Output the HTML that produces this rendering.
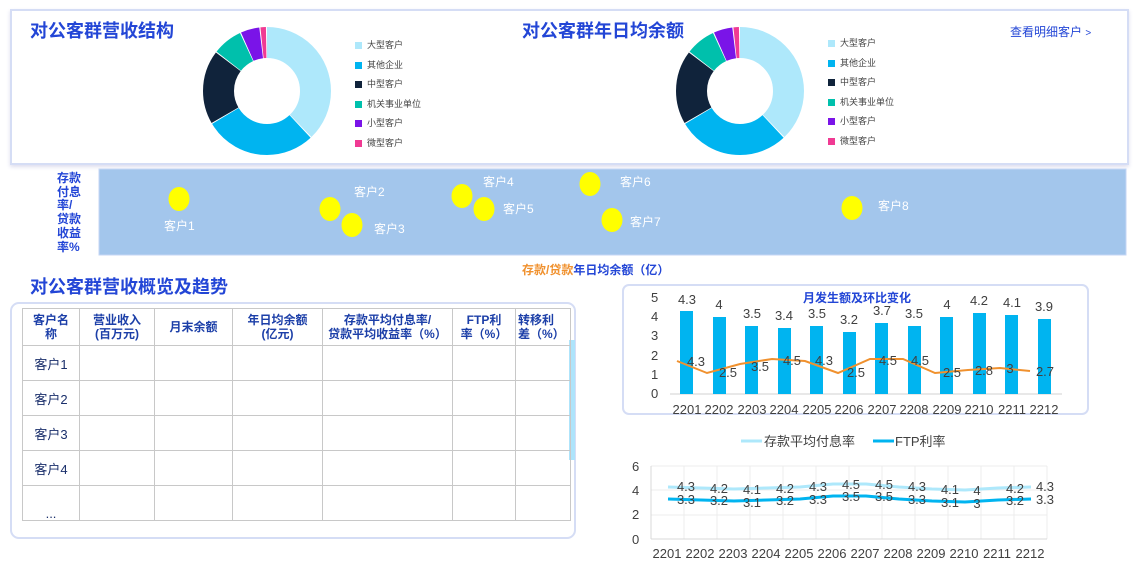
<!DOCTYPE html>
<html><head><meta charset="utf-8"><style>
*{margin:0;padding:0;box-sizing:border-box}
body{width:1137px;height:562px;background:#fff;position:relative;overflow:hidden;font-family:"Liberation Sans","Noto Sans CJK SC",sans-serif}
.a{position:absolute;white-space:nowrap}
.t{color:#2346d6;font-weight:bold;font-size:18px}
.lg{font-size:9px;color:#444}
.lg i{display:inline-block;width:7px;height:7px;margin-right:5px;vertical-align:-1px}
table{border-collapse:collapse;table-layout:fixed}
td{border:1px solid #c8c8c8;text-align:center;font-size:13px;color:#1a2f6b;height:35px}
tr.h td{font-size:12px;font-weight:bold;color:#1c3fa8;height:37px;line-height:14px}
</style></head><body>
<div class="a" style="left:10px;top:9px;width:1119px;height:156px;border:2px solid #d5ddf5;box-shadow:0 2px 4px #dde"></div>
<div class="a t" style="left:30px;top:17px">对公客群营收结构</div>
<div class="a t" style="left:522px;top:17px">对公客群年日均余额</div>
<div class="a" style="left:1010px;top:23px;font-size:12px;color:#2346d6">查看明细客户 <span style="font-size:10px">&gt;</span></div>
<svg class="a" style="left:0;top:0" width="1137" height="562">
<g id="p1" transform="translate(267,91) rotate(-90)" fill="none" stroke-width="31">
<circle r="48.5" pathLength="360" stroke="#aee8fb" stroke-dasharray="136 360"/>
<circle r="48.5" pathLength="360" stroke="#00b4f0" stroke-dasharray="102 360" stroke-dashoffset="-137"/>
<circle r="48.5" pathLength="360" stroke="#10233b" stroke-dasharray="67 360" stroke-dashoffset="-240"/>
<circle r="48.5" pathLength="360" stroke="#00c0ac" stroke-dasharray="27 360" stroke-dashoffset="-308"/>
<circle r="48.5" pathLength="360" stroke="#7a14e8" stroke-dasharray="17 360" stroke-dashoffset="-336"/>
<circle r="48.5" pathLength="360" stroke="#f03a93" stroke-dasharray="5 360" stroke-dashoffset="-354"/>
</g>
<use href="#p1" transform="translate(473,0)"/>
<rect x="99" y="169" width="1027" height="86" fill="#a3c6ec" stroke="#c5d6f5"/>
<g fill="#ffff00">
<ellipse cx="179" cy="199" rx="10.5" ry="12"/><ellipse cx="330" cy="209" rx="10.5" ry="12"/><ellipse cx="352" cy="225" rx="10.5" ry="12"/><ellipse cx="462" cy="196" rx="10.5" ry="12"/><ellipse cx="484" cy="209" rx="10.5" ry="12"/><ellipse cx="590" cy="184" rx="10.5" ry="12"/><ellipse cx="612" cy="220" rx="10.5" ry="12"/><ellipse cx="852" cy="208" rx="10.5" ry="12"/>
</g>
<g fill="#fff" font-size="12" font-family="Liberation Sans,Noto Sans CJK SC,sans-serif">
<text x="164" y="230">客户1</text><text x="354" y="196">客户2</text><text x="374" y="233">客户3</text><text x="483" y="186">客户4</text><text x="503" y="213">客户5</text><text x="620" y="186">客户6</text><text x="630" y="226">客户7</text><text x="878" y="210">客户8</text>
</g>
<rect x="11" y="303" width="564" height="235" rx="8" fill="#fff" stroke="#d5ddf5" stroke-width="2"/>
<rect x="569" y="340" width="6" height="120" fill="#aee4fb"/>
<rect x="623" y="285" width="465" height="129" rx="6" fill="#fff" stroke="#d5ddf5" stroke-width="2"/>
<line x1="670" y1="394" x2="1062" y2="394" stroke="#d0d0d0"/>
<g font-size="13" fill="#404040" font-family="Liberation Sans,sans-serif">
<text x="651" y="302">5</text><text x="651" y="321">4</text><text x="651" y="340">3</text><text x="651" y="360">2</text><text x="651" y="379">1</text><text x="651" y="398">0</text>
</g>
<g fill="#00b4f0">
<rect x="680" y="311" width="13" height="83"/><rect x="713" y="317" width="13" height="77"/><rect x="745" y="326" width="13" height="68"/><rect x="778" y="328" width="13" height="66"/><rect x="810" y="326" width="13" height="68"/><rect x="843" y="332" width="13" height="62"/><rect x="875" y="323" width="13" height="71"/><rect x="908" y="326" width="13" height="68"/><rect x="940" y="317" width="13" height="77"/><rect x="973" y="313" width="13" height="81"/><rect x="1005" y="315" width="13" height="79"/><rect x="1038" y="319" width="13" height="75"/>
</g>
<polyline fill="none" stroke="#f0912e" stroke-width="2" points="677,361 707,373 740,364 772,359 805,361 838,373 870,359 903,359 935,373 968,370 1000,368 1030,371"/>
<g font-size="13" fill="#404040" text-anchor="middle" font-family="Liberation Sans,sans-serif">
<text x="687" y="304">4.3</text><text x="719" y="309">4</text><text x="752" y="318">3.5</text><text x="784" y="320">3.4</text><text x="817" y="318">3.5</text><text x="849" y="324">3.2</text><text x="882" y="315">3.7</text><text x="914" y="318">3.5</text><text x="947" y="309">4</text><text x="979" y="305">4.2</text><text x="1012" y="307">4.1</text><text x="1044" y="311">3.9</text>
<text x="696" y="366">4.3</text><text x="728" y="377">2.5</text><text x="760" y="371">3.5</text><text x="792" y="365">4.5</text><text x="824" y="365">4.3</text><text x="856" y="377">2.5</text><text x="888" y="365">4.5</text><text x="920" y="365">4.5</text><text x="952" y="377">2.5</text><text x="984" y="375">2.8</text><text x="1010" y="373">3</text><text x="1045" y="376">2.7</text>
<text x="687" y="414">2201</text><text x="719" y="414">2202</text><text x="752" y="414">2203</text><text x="784" y="414">2204</text><text x="817" y="414">2205</text><text x="849" y="414">2206</text><text x="882" y="414">2207</text><text x="914" y="414">2208</text><text x="947" y="414">2209</text><text x="979" y="414">2210</text><text x="1012" y="414">2211</text><text x="1044" y="414">2212</text>
</g>
<g stroke="#ececec">
<line x1="651" y1="466" x2="1047" y2="466"/><line x1="651" y1="490" x2="1047" y2="490"/><line x1="651" y1="515" x2="1047" y2="515"/>
<line x1="684" y1="466" x2="684" y2="539"/><line x1="717" y1="466" x2="717" y2="539"/><line x1="750" y1="466" x2="750" y2="539"/><line x1="783" y1="466" x2="783" y2="539"/><line x1="816" y1="466" x2="816" y2="539"/><line x1="849" y1="466" x2="849" y2="539"/><line x1="882" y1="466" x2="882" y2="539"/><line x1="915" y1="466" x2="915" y2="539"/><line x1="948" y1="466" x2="948" y2="539"/><line x1="981" y1="466" x2="981" y2="539"/><line x1="1014" y1="466" x2="1014" y2="539"/><line x1="1047" y1="466" x2="1047" y2="539"/>
</g>
<line x1="651" y1="466" x2="651" y2="539" stroke="#d8d8d8"/><line x1="651" y1="539" x2="1047" y2="539" stroke="#d8d8d8"/>
<polyline fill="none" stroke="#aee8fb" stroke-width="3" points="668,487 701,488 734,489 767,488 800,487 833,484 866,484 899,487 932,489 965,490 998,488 1031,487"/>
<polyline fill="none" stroke="#00b4f0" stroke-width="3" points="668,499 701,500 734,501 767,500 800,499 833,496 866,496 899,499 932,501 965,502 998,500 1031,499"/>
<line x1="741" y1="441" x2="762" y2="441" stroke="#aee8fb" stroke-width="3"/>
<line x1="873" y1="441" x2="894" y2="441" stroke="#00b4f0" stroke-width="3"/>
<g font-size="13" fill="#404040" font-family="Liberation Sans,Noto Sans CJK SC,sans-serif">
<text x="764" y="446">存款平均付息率</text><text x="895" y="446">FTP利率</text>
<text x="632" y="471">6</text><text x="632" y="495">4</text><text x="632" y="519">2</text><text x="632" y="544">0</text>
</g>
<g font-size="13" fill="#404040" text-anchor="middle" font-family="Liberation Sans,sans-serif">
<text x="686" y="491">4.3</text><text x="719" y="493">4.2</text><text x="752" y="494">4.1</text><text x="785" y="493">4.2</text><text x="818" y="491">4.3</text><text x="851" y="489">4.5</text><text x="884" y="489">4.5</text><text x="917" y="491">4.3</text><text x="950" y="494">4.1</text><text x="977" y="495">4</text><text x="1015" y="493">4.2</text><text x="1045" y="491">4.3</text>
<text x="686" y="504">3.3</text><text x="719" y="505">3.2</text><text x="752" y="507">3.1</text><text x="785" y="505">3.2</text><text x="818" y="504">3.3</text><text x="851" y="501">3.5</text><text x="884" y="501">3.5</text><text x="917" y="504">3.3</text><text x="950" y="507">3.1</text><text x="977" y="508">3</text><text x="1015" y="505">3.2</text><text x="1045" y="504">3.3</text>
<text x="667" y="558">2201</text><text x="700" y="558">2202</text><text x="733" y="558">2203</text><text x="766" y="558">2204</text><text x="799" y="558">2205</text><text x="832" y="558">2206</text><text x="865" y="558">2207</text><text x="898" y="558">2208</text><text x="931" y="558">2209</text><text x="964" y="558">2210</text><text x="997" y="558">2211</text><text x="1030" y="558">2212</text>
</g>
</svg>
<div class="a lg" style="left:355px;top:36px;line-height:19.5px">
<div><i style="background:#aee8fb"></i>大型客户</div><div><i style="background:#00b4f0"></i>其他企业</div><div><i style="background:#10233b"></i>中型客户</div><div><i style="background:#00c0ac"></i>机关事业单位</div><div><i style="background:#7a14e8"></i>小型客户</div><div><i style="background:#f03a93"></i>微型客户</div></div>
<div class="a lg" style="left:828px;top:34px;line-height:19.5px">
<div><i style="background:#aee8fb"></i>大型客户</div><div><i style="background:#00b4f0"></i>其他企业</div><div><i style="background:#10233b"></i>中型客户</div><div><i style="background:#00c0ac"></i>机关事业单位</div><div><i style="background:#7a14e8"></i>小型客户</div><div><i style="background:#f03a93"></i>微型客户</div></div>
<div class="a" style="left:57px;top:172px;font-size:12px;line-height:13.7px;color:#2346d6;font-weight:bold;white-space:normal;width:28px">存款<br>付息<br>率/<br>贷款<br>收益<br>率%</div>
<div class="a" style="left:522px;top:261px;font-size:12px;font-weight:bold;color:#2346d6"><span style="color:#f0912e">存款/贷款</span>年日均余额（亿）</div>
<div class="a t" style="left:30px;top:273px">对公客群营收概览及趋势</div>
<div class="a" style="left:803px;top:289px;font-size:12px;font-weight:bold;color:#2346d6">月发生额及环比变化</div>
<table class="a" style="left:22px;top:308px;width:548px">
<colgroup><col style="width:57px"><col style="width:75px"><col style="width:78px"><col style="width:90px"><col style="width:130px"><col style="width:63px"><col style="width:55px"></colgroup>
<tr class="h"><td>客户名<br>称</td><td>营业收入<br>(百万元)</td><td>月末余额</td><td>年日均余额<br>(亿元)</td><td>存款平均付息率/<br>贷款平均收益率（%）</td><td>FTP利<br>率（%）</td><td style="text-align:left;padding-left:2px">转移利<br>差（%）</td></tr>
<tr><td>客户1</td><td></td><td></td><td></td><td></td><td></td><td></td></tr>
<tr><td>客户2</td><td></td><td></td><td></td><td></td><td></td><td></td></tr>
<tr><td>客户3</td><td></td><td></td><td></td><td></td><td></td><td></td></tr>
<tr><td>客户4</td><td></td><td></td><td></td><td></td><td></td><td></td></tr>
<tr><td style="vertical-align:bottom;line-height:12px">...</td><td></td><td></td><td></td><td></td><td></td><td></td></tr>
</table>
</body></html>
